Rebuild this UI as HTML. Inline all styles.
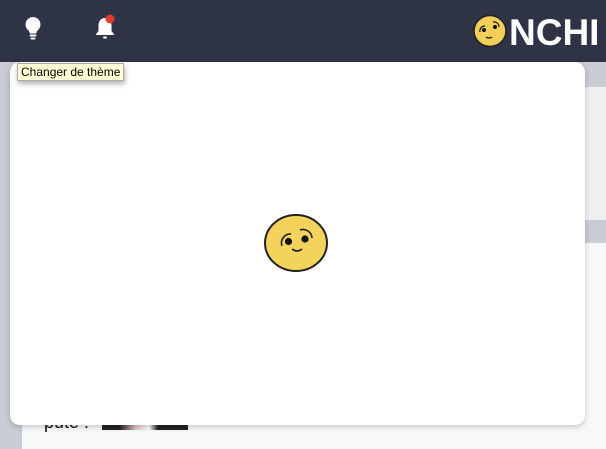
<!DOCTYPE html>
<html><head><meta charset="utf-8"><style>
body{margin:0;width:606px;height:449px;overflow:hidden;position:relative;background:#eef0f2;font-family:"Liberation Sans",sans-serif}
.hdr{position:absolute;left:0;top:0;width:606px;height:62px;background:#2e3446}
.strip{position:absolute;left:0;top:62px;width:22px;height:387px;background:#c9ccd3}
.cont{position:absolute;left:22px;top:243px;width:584px;height:206px;background:#f7f8f9}
.band1{position:absolute;left:22px;top:62px;width:584px;height:25px;background:#c9ccd3}
.band2{position:absolute;left:22px;top:220px;width:584px;height:23px;background:#c9ccd3}
.modal{position:absolute;left:10px;top:62px;width:575px;height:363px;background:#fff;border-radius:10px;box-shadow:0 2px 6px rgba(0,0,0,.2)}
.tip{position:absolute;left:17px;top:63px;background:#ffffd6;border:1px solid #aaa;font-size:12px;padding:1px 3px;box-shadow:1px 3px 5px rgba(0,0,0,.3);color:#000}
.logo{position:absolute;left:509px;top:12px;color:#fff;font-weight:bold;font-size:37px;letter-spacing:0;white-space:nowrap}
</style></head><body>
<div class="hdr"></div>
<div class="band1"></div><div class="band2"></div>
<div class="cont"></div>
<div class="strip"></div>
<div style="position:absolute;left:560px;top:340px;font-size:18px;color:#111">s f</div>
<div style="position:absolute;left:44px;top:412px;font-size:18px;color:#111">pute :</div>
<div style="position:absolute;left:102px;top:424px;width:86px;height:6px;background:linear-gradient(90deg,#222 20%,#e8c8c8 40%,#fff 55%,#222 65%)"></div>
<svg style="position:absolute;left:22px;top:16px" width="22" height="26" viewBox="0 0 22 26"><path d="M11 1a7.5 7.5 0 0 0-4.5 13.5c.8.8 1.2 2 1.3 3h6.4c.1-1 .5-2.2 1.3-3A7.5 7.5 0 0 0 11 1z" fill="#fff"/><rect x="7.5" y="18.5" width="7" height="2" rx="1" fill="#fff"/><rect x="8.5" y="21.5" width="5" height="2" rx="1" fill="#fff"/></svg>
<svg style="position:absolute;left:92px;top:13px" width="28" height="30" viewBox="0 0 28 30"><path d="M13 5c-4.5 0-6.5 3.5-6.5 7.5v5.5l-3 4h19l-3-4v-5.5c0-4-2-7.5-6.5-7.5z" fill="#fff"/><rect x="11" y="23.5" width="4" height="2" rx="1" fill="#fff"/><circle cx="18" cy="6" r="4.5" fill="#e53935"/></svg>
<svg style="position:absolute;left:473px;top:14px" width="36" height="34" viewBox="0 0 36 34"><ellipse cx="17" cy="17" rx="16" ry="15.5" fill="#f0cf5a" stroke="#222" stroke-width="1.5"/><circle cx="11" cy="16" r="2" fill="#111"/><circle cx="22" cy="13" r="2" fill="#111"/><path d="M7 18a5 5 0 0 1 5-6M20 8a5 5 0 0 1 6 5M13 23q3 2 6 0" stroke="#111" stroke-width="1.2" fill="none"/></svg>
<div class="logo">NCHI</div>
<div class="modal"></div>
<svg style="position:absolute;left:264px;top:214px" width="66" height="60" viewBox="0 0 66 60"><ellipse cx="32" cy="29" rx="31" ry="28" fill="#f3d35c" stroke="#222" stroke-width="2"/><circle cx="24.5" cy="27.5" r="3.6" fill="#111"/><circle cx="41" cy="25" r="3.6" fill="#111"/><path d="M18 32a9 9 0 0 1 9-12M36 16a9 9 0 0 1 12 8M28 35q5 4 10 0" stroke="#222" stroke-width="1.6" fill="none"/></svg>
<div class="tip">Changer de thème</div>
</body></html>
